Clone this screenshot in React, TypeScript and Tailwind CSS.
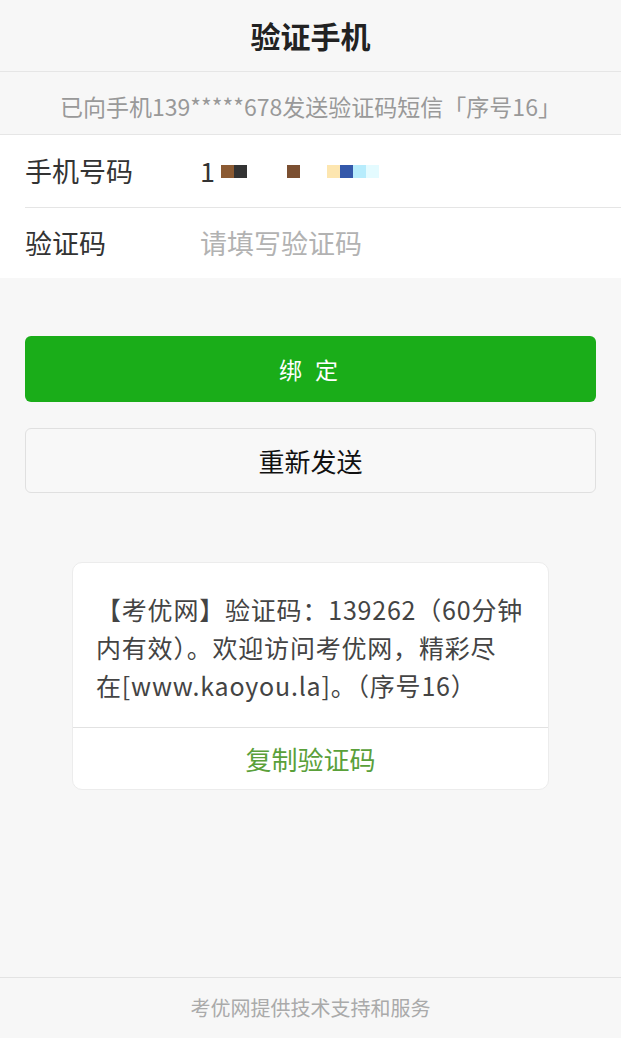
import React from 'react';

const font = { fontFamily: '"Noto Sans CJK SC", "Noto Sans", sans-serif' };

function Mosaic() {
  // blurred phone digits
  return (
    <span className="ml-[6px] inline-flex items-center">
      <span className="h-[13px] w-[13px] bg-[#8b5a32]" />
      <span className="h-[13px] w-[13px] bg-[#333333]" />
      <span className="ml-[40px] h-[13px] w-[13px] bg-[#7b4f31]" />
      <span className="ml-[27px] h-[13px] w-[13px] bg-[#fde6b0]" />
      <span className="h-[13px] w-[13px] bg-[#3458aa]" />
      <span className="h-[13px] w-[13px] bg-[#b7ecfc]" />
      <span className="h-[13px] w-[13px] bg-[#e4fbff]" />
    </span>
  );
}

export default function App() {
  return (
    <div className="flex min-h-[1038px] w-[621px] flex-col bg-[#f7f7f7] text-[#333]" style={font}>
      <div className="flex h-[72px] items-center justify-center border-b border-[#e6e6e6] bg-[#f7f7f7]">
        <h1 className="text-[30px] font-bold text-[#222]">验证手机</h1>
      </div>

      <div className="flex h-[63px] items-center justify-center border-b border-[#e6e6e6] pt-[6px] text-[23px] text-[#999]">
        已向手机139*****678发送验证码短信「序号16」
      </div>

      <div className="bg-white">
        <div className="flex h-[72px] items-center pl-[25px]">
          <span className="w-[175px] text-[27px] text-[#333]">手机号码</span>
          <span className="flex items-center text-[27px] text-[#333]">
            1
            <Mosaic />
          </span>
        </div>
        <div className="ml-[25px] border-t border-[#e5e5e5]" />
        <div className="flex h-[70px] items-center pl-[25px]">
          <span className="w-[175px] text-[27px] text-[#333]">验证码</span>
          <input
            className="flex-1 bg-transparent text-[27px] text-[#333] outline-none placeholder:text-[#b2b2b2]"
            placeholder="请填写验证码"
            style={font}
          />
        </div>
      </div>

      <div className="px-[25px] pt-[58px]">
        <button
          className="flex h-[66px] w-full items-center justify-center rounded-[6px] bg-[#1aad19] text-[23px] tracking-[4px] text-white"
          style={font}
        >
          绑 定
        </button>
        <button
          className="mt-[26px] flex h-[65px] w-full items-center justify-center rounded-[6px] border border-[#e0e0e0] bg-[#f8f8f8] text-[26px] text-[#111]"
          style={font}
        >
          重新发送
        </button>
      </div>

      <div className="flex justify-center pt-[69px]">
        <div className="w-[477px] rounded-[10px] border border-[#ececec] bg-white">
          <p className="whitespace-nowrap px-[23px] pb-[23px] pt-[27px] text-[25px] leading-[38px] tracking-[0.8px] text-[#444]">
            【考优网】验证码：139262（60分钟
            <br />
            内有效）。欢迎访问考优网，精彩尽
            <br />
            在[www.kaoyou.la]。（序号16）
          </p>
          <div className="flex h-[62px] items-center justify-center border-t border-[#e2e2e2] text-[26px] text-[#5aa03a]">
            复制验证码
          </div>
        </div>
      </div>

      <div className="flex-1" />

      <div className="flex h-[61px] items-center justify-center border-t border-[#e3e3e3] text-[20px] text-[#aaa]">
        考优网提供技术支持和服务
      </div>
    </div>
  );
}
